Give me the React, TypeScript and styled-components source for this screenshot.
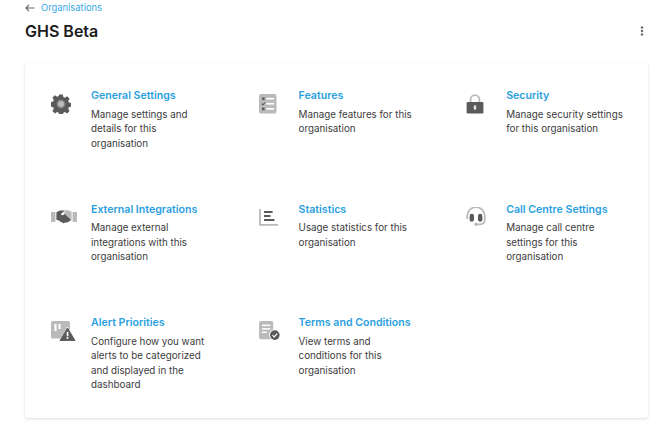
import React from "react";
import styled, { createGlobalStyle } from "styled-components";

const GlobalStyle = createGlobalStyle`
  html, body {
    margin: 0;
    padding: 0;
    background: #fff;
    font-family: Inter, "Liberation Sans", sans-serif;
  }
`;

const DARK = "#5a5a5a";
const LIGHT = "#bababa";

const GearIcon = () => (
  <svg width="20" height="20" viewBox="0 0 20 20">
    <path
      fill={DARK}
      d="M8.2 0.5h3.6l.5 2.5 1.6.7 2.2-1.4 2.5 2.5-1.4 2.2.7 1.6 2.5.5v3.6l-2.5.5-.7 1.6 1.4 2.2-2.5 2.5-2.2-1.4-1.6.7-.5 2.5H8.2l-.5-2.5-1.6-.7-2.2 1.4-2.5-2.5 1.4-2.2-.7-1.6-2.5-.5V8.1l2.5-.5.7-1.6L1.4 3.8l2.5-2.5 2.2 1.4 1.6-.7z"
    />
    <circle cx="10" cy="10" r="4.4" fill="#fff" opacity="0.25" />
    <circle cx="10" cy="10" r="3" fill={LIGHT} />
  </svg>
);

const ChecklistIcon = () => (
  <svg width="18" height="20" viewBox="0 0 18 20">
    <rect x="0" y="0" width="17.5" height="19.5" rx="2" fill={LIGHT} />
    <rect x="3" y="3.4" width="2.6" height="2.6" fill={DARK} />
    <path d="M2.8 9.6l1.2 1.2 2-2.2" fill="none" stroke={DARK} strokeWidth="1.1" />
    <rect x="3" y="13.6" width="2.6" height="2.6" fill={DARK} />
    <rect x="7.4" y="3.8" width="7.6" height="1.7" fill="#fff" />
    <rect x="7.4" y="8.9" width="7.6" height="1.7" fill="#fff" />
    <rect x="7.4" y="14" width="7.6" height="1.7" fill="#fff" />
  </svg>
);

const LockIcon = () => (
  <svg width="18" height="20" viewBox="0 0 18 20">
    <path d="M4.6 9V5.6a4.4 4.4 0 0 1 8.8 0V9" fill="none" stroke={LIGHT} strokeWidth="1.8" />
    <rect x="0.6" y="8" width="16.8" height="11.4" rx="1.2" fill={DARK} />
    <rect x="7.8" y="11.2" width="2.4" height="4.6" rx="1" fill="#e4e4e4" />
  </svg>
);

const HandshakeIcon = () => (
  <svg width="26" height="16" viewBox="0 0 26 16">
    <rect x="0" y="3" width="4.4" height="10" fill={LIGHT} />
    <rect x="21.6" y="3" width="4.4" height="10" fill={LIGHT} />
    <path fill={LIGHT} d="M14 1.2h3.2l3.4 1.6v8.4h-1.4L13 5.6z" />
    <path
      fill={DARK}
      d="M5.4 3.2L9 1.4h5l-3.6 3.2c-.8.9.3 2.2 1.4 1.6l2-1.2 5.6 5.4c.8 1-.4 2.2-1.4 1.5l-.4 1c-.6.7-1.5.4-1.9 0-.3.9-1.3 1.1-2 .6-.5.8-1.5.8-2.3.3L6.8 11H5.4z"
    />
  </svg>
);

const StatsIcon = () => (
  <svg width="19" height="17" viewBox="0 0 19 17">
    <path d="M1 0v15.8h18" fill="none" stroke={LIGHT} strokeWidth="1.8" />
    <rect x="5" y="2" width="8.6" height="2" fill={DARK} />
    <rect x="5" y="6" width="6.5" height="2" fill={DARK} />
    <rect x="5" y="10" width="10.5" height="2" fill={DARK} />
  </svg>
);

const HeadsetIcon = () => (
  <svg width="20" height="20" viewBox="0 0 20 20">
    <path d="M1.2 12V9a8.8 8.8 0 0 1 17.6 0v3.5c0 3-2 4.800-5 4.800H11" fill="none" stroke={LIGHT} strokeWidth="1.8" />
    <circle cx="10" cy="17.300" r="1.700" fill={LIGHT} />
    <rect x="3.600" y="6.800" width="4.400" height="8" rx="2.200" fill={DARK} />
    <rect x="12" y="6.800" width="4.400" height="8" rx="2.200" fill={DARK} />
  </svg>
);

const AlertIcon = () => (
  <svg width="25" height="20" viewBox="0 0 25 20">
    <rect x="0" y="0" width="19" height="17.5" rx="1.5" fill={LIGHT} />
    <rect x="3.4" y="3" width="2.2" height="7" fill="#fff" />
    <rect x="7.4" y="3" width="2.2" height="5" fill="#fff" />
    <path d="M16.5 5.5L25 20H8z" fill="#fff" />
    <path d="M16.5 7L24 19.6H9z" fill={DARK} stroke={DARK} strokeLinejoin="round" />
    <rect x="15.7" y="10.8" width="1.7" height="4.6" fill="#fff" />
    <rect x="15.7" y="16.2" width="1.7" height="1.7" fill="#fff" />
  </svg>
);

const TermsIcon = () => (
  <svg width="22" height="20" viewBox="0 0 24 22">
    <rect x="0" y="0" width="15.5" height="20" rx="2" fill={LIGHT} />
    <rect x="3" y="4" width="9.5" height="1.6" fill="#fff" />
    <rect x="3" y="7.8" width="9.5" height="1.6" fill="#fff" />
    <rect x="3" y="11.6" width="5.5" height="1.6" fill="#fff" />
    <circle cx="17.3" cy="15.5" r="6.3" fill="#fff" />
    <circle cx="17.3" cy="15.5" r="5.3" fill={DARK} />
    <path d="M14.7 15.6l1.9 1.9 3.3-3.6" fill="none" stroke="#fff" strokeWidth="1.3" />
  </svg>
);

const MoreIcon = () => (
  <svg width="4" height="10" viewBox="0 0 4 10">
    <circle cx="2" cy="1.500" r="1.200" fill="#666" />
    <circle cx="2" cy="5" r="1.200" fill="#666" />
    <circle cx="2" cy="8.500" r="1.200" fill="#666" />
  </svg>
);

const BackIcon = () => (
  <svg width="10" height="8" viewBox="0 0 10 8">
    <path d="M9.5 4H1M4 .8L.9 4 4 7.2" fill="none" stroke="#666" strokeWidth="1.2" />
  </svg>
);

const items = [
  { icon: <GearIcon />, title: "General Settings", text: "Manage settings and details for this organisation" },
  { icon: <ChecklistIcon />, title: "Features", text: "Manage features for this organisation" },
  { icon: <LockIcon />, title: "Security", text: "Manage security settings for this organisation" },
  { icon: <HandshakeIcon />, title: "External Integrations", text: "Manage external integrations with this organisation" },
  { icon: <StatsIcon />, title: "Statistics", text: "Usage statistics for this organisation" },
  { icon: <HeadsetIcon />, title: "Call Centre Settings", text: "Manage call centre settings for this organisation" },
  { icon: <AlertIcon />, title: "Alert Priorities", text: "Configure how you want alerts to be categorized and displayed in the dashboard" },
  { icon: <TermsIcon />, title: "Terms and Conditions", text: "View terms and conditions for this organisation" },
];

export default function App() {
  return (
    <Page>
      <GlobalStyle />
      <Breadcrumb>
        <BackIcon />
        <BreadcrumbLink>Organisations</BreadcrumbLink>
      </Breadcrumb>
      <Header>
        <Title>GHS Beta</Title>
        <MoreIcon />
      </Header>
      <Card>
        {items.map((item) => (
          <Item key={item.title}>
            <IconSlot>{item.icon}</IconSlot>
            <div>
              <ItemTitle>{item.title}</ItemTitle>
              <ItemText>{item.text}</ItemText>
            </div>
          </Item>
        ))}
      </Card>
    </Page>
  );
}

const Page = styled.div`
  width: 670px;
  height: 428px;
  overflow: hidden;
  box-sizing: border-box;
  padding: 0 22px 0 25px;
`;

const Breadcrumb = styled.div`
  display: flex;
  align-items: center;
  gap: 6px;
  height: 15px;
`;

const BreadcrumbLink = styled.a`
  font-size: 9.4px;
  color: #3aa6e6;
`;

const Header = styled.div`
  display: flex;
  align-items: center;
  justify-content: space-between;
  height: 32px;
  padding-right: 4px;
  margin-bottom: 16px;
`;

const Title = styled.h1`
  margin: 0;
  font-size: 16px;
  font-weight: 600;
  color: #1c1c1c;
`;

const Card = styled.div`
  display: grid;
  grid-template-columns: repeat(3, 207.6px);
  grid-auto-rows: 113.5px;
  box-sizing: border-box;
  height: 355px;
  padding-top: 25px;
  border-radius: 3px;
  background: #fff;
  box-shadow: 0 1px 3px rgba(0, 0, 0, 0.14);
`;

const Item = styled.div`
  display: grid;
  grid-template-columns: 66px 120px;
  align-items: start;
`;

const IconSlot = styled.div`
  display: flex;
  align-items: center;
  height: 19px;
  padding: 6px 0 0 26px;
`;

const ItemTitle = styled.div`
  padding-top: 1px;
  font-size: 10.6px;
  line-height: 14px;
  font-weight: 600;
  color: #2a9fe0;
`;

const ItemText = styled.p`
  margin: 4.5px 0 0;
  font-size: 9.8px;
  line-height: 14.5px;
  color: #3c3c3c;
`;
